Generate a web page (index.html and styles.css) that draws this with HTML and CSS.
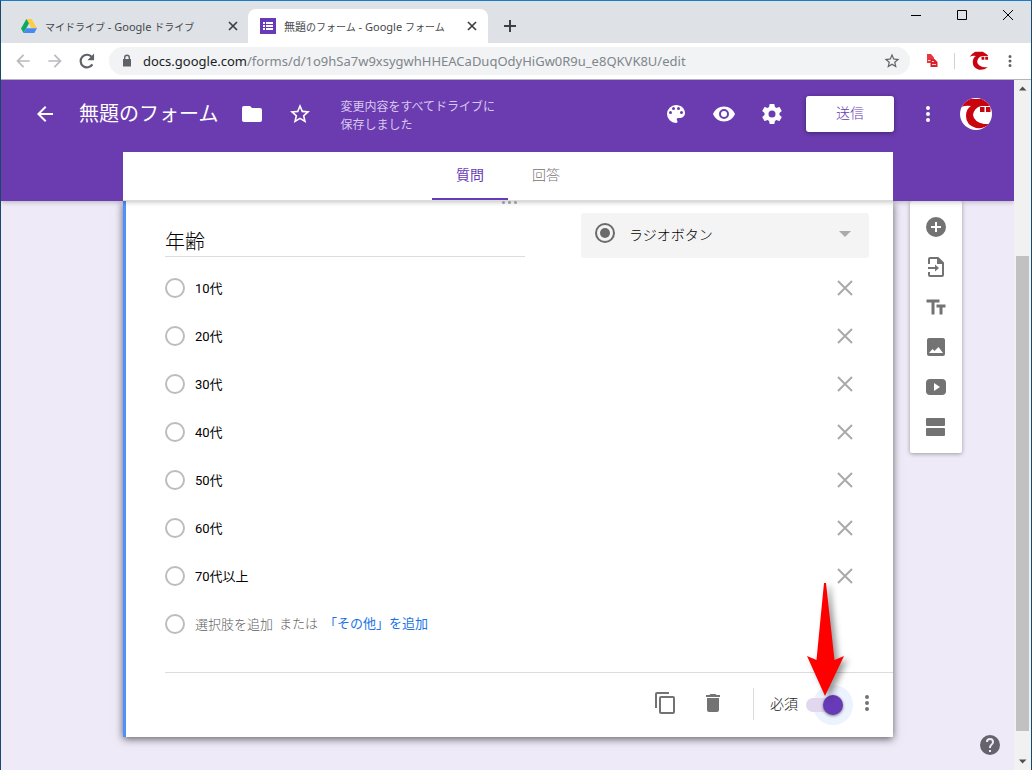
FILE: index.html
```html
<!DOCTYPE html>
<html lang="ja">
<head>
<meta charset="utf-8">
<meta name="viewport" content="width=device-width, initial-scale=1">
<title>無題のフォーム - Google フォーム</title>
<link rel="stylesheet" href="styles.css">
</head>
<body>
<svg class="defs" aria-hidden="true">
  <symbol id="close" viewBox="0 0 24 24"><path d="M5 5l14 14M19 5L5 19" fill="none" stroke="currentColor" stroke-width="2"/></symbol>
  <symbol id="tabclose" viewBox="0 0 16 16"><path d="M4 4l8 8M12 4l-8 8" fill="none" stroke="currentColor" stroke-width="1.700"/></symbol>
  <symbol id="more" viewBox="0 0 24 24"><path d="M12 8a2 2 0 1 0 0-4 2 2 0 0 0 0 4zm0 2a2 2 0 1 0 0 4 2 2 0 0 0 0-4zm0 6a2 2 0 1 0 0 4 2 2 0 0 0 0-4z"/></symbol>
  <symbol id="star" viewBox="0 0 24 24"><path d="M22 9.24l-7.19-.62L12 2 9.19 8.63 2 9.24l5.46 4.73L5.82 21 12 17.27 18.18 21l-1.63-7.03L22 9.24zM12 15.4l-3.76 2.27 1-4.28-3.32-2.88 4.38-.38L12 6.1l1.71 4.04 4.38.38-3.32 2.88 1 4.28L12 15.4z"/></symbol>
  <symbol id="back" viewBox="0 0 24 24"><path d="M20 11H7.83l5.59-5.59L12 4l-8 8 8 8 1.41-1.41L7.83 13H20v-2z"/></symbol>
  <symbol id="mascot" viewBox="0 0 32 32"><path d="M1 9Q5 3 10 1H22Q28 4 31 8L21 8Q14 10 13 17Q14 24 24 26L30 26Q24 31 16 30Q6 27 6 18Q6 11 11 8Q6 7 1 9z" fill="#c9040f"/><path d="M20 9h4.500v5H20zM26 9h4.500v5H26z" fill="#c9040f"/></symbol>
</svg>
<div class="window">
  <header class="tabstrip">
    <div class="tab">
      <svg class="i16" viewBox="0 0 16 16"><path d="M5.4 1h5.2L16 10.3h-5.3z" fill="#ffcd40"/><path d="M5.4 1L0 10.4 2.6 15 8 5.6z" fill="#11a861"/><path d="M5.3 10.3H16L13.3 15H2.6z" fill="#4688f4"/></svg>
      <span class="tab-title"><span class="kana">マイドライブ</span> - Google <span class="kana">ドライブ</span></span>
      <button class="tab-close" aria-label="閉じる"><svg class="i16"><use href="#tabclose"/></svg></button>
    </div>
    <div class="tab active">
      <svg class="i16" viewBox="0 0 16 16"><path d="M0 0h16v16H0z" fill="#673ab7"/><path d="M3 4h2v2H3zM3 7h2v2H3zM3 10h2v2H3zM6 4h7v2H6zM6 7h7v2H6zM6 10h7v2H6z" fill="#fff"/></svg>
      <span class="tab-title">無題<span class="kana">のフォーム</span> - Google <span class="kana">フォーム</span></span>
      <button class="tab-close" aria-label="閉じる"><svg class="i16"><use href="#tabclose"/></svg></button>
    </div>
    <button class="new-tab" aria-label="新しいタブ"><svg class="i16" viewBox="0 0 16 16"><path d="M8 2v12M2 8h12" stroke="#3c4043" stroke-width="2"/></svg></button>
    <div class="win-controls">
      <button aria-label="最小化"><svg viewBox="0 0 10 10"><path d="M0 5.5h10" stroke="#000"/></svg></button>
      <button aria-label="最大化"><svg viewBox="0 0 10 10"><path d="M.5.5h9v9h-9z" stroke="#000" fill="none"/></svg></button>
      <button aria-label="ウィンドウを閉じる"><svg viewBox="0 0 10 10"><path d="M0 0l10 10M10 0L0 10" stroke="#000"/></svg></button>
    </div>
  </header>
  <nav class="toolbar">
    <button class="nav-btn dim" aria-label="戻る"><svg viewBox="0 0 24 24"><use href="#back"/></svg></button>
    <button class="nav-btn dim" aria-label="進む"><svg viewBox="0 0 24 24"><path d="M4 11h12.17l-5.59-5.59L12 4l8 8-8 8-1.41-1.41L16.17 13H4z"/></svg></button>
    <button class="nav-btn" aria-label="再読み込み"><svg viewBox="0 0 24 24"><path d="M18.5 16A7.6 7.6 0 1 1 17.8 7.2" fill="none" stroke="currentColor" stroke-width="2.6"/><path d="M20.5 3v8h-8z"/></svg></button>
    <div class="omnibox">
      <svg class="lock" viewBox="0 0 16 16"><path d="M4 6h8v7.500H4z"/><path d="M5.700 7V4.500a2.300 2.300 0 0 1 4.600 0V7" fill="none" stroke="currentColor" stroke-width="1.400"/></svg>
      <span class="url"><b>docs.google.com</b>/forms/d/1o9hSa7w9xsygwhHHEACaDuqOdyHiGw0R9u_e8QKVK8U/edit</span>
      <button class="bookmark" aria-label="ブックマーク"><svg viewBox="0 0 24 24"><use href="#star"/></svg></button>
    </div>
    <svg class="ext" viewBox="0 0 16 16"><path d="M3 1h4l3 3.500V10H3z" fill="#e5383f"/><path d="M6.500 6h4L13.500 9v5h-7z" fill="#d9202b"/><path d="M4 7.500h2.500M8 11.500h4M8 8.500h2" stroke="#fff" stroke-width=".8"/></svg>
    <span class="sep"></span>
    <svg class="chrome-avatar" viewBox="0 0 32 32"><use href="#mascot"/></svg>
    <button class="chrome-more" aria-label="メニュー"><svg viewBox="0 0 24 24"><use href="#more"/></svg></button>
  </nav>
  <div class="viewport">
    <div class="app">
      <header class="app-head">
        <div class="head-row">
          <button class="icon" aria-label="戻る"><svg><use href="#back"/></svg></button>
          <h1>無題のフォーム</h1>
          <button class="icon" aria-label="フォルダに移動"><svg viewBox="0 0 24 24"><path d="M10 4H4a2 2 0 0 0-2 2v12c0 1.100.900 2 2 2h16a2 2 0 0 0 2-2V8a2 2 0 0 0-2-2h-8z"/></svg></button>
          <button class="icon star" aria-label="スターを付ける"><svg><use href="#star"/></svg></button>
          <p class="saved">変更内容をすべてドライブに<br>保存しました</p>
          <div class="head-actions">
            <button class="icon" aria-label="テーマ"><svg viewBox="0 0 24 24"><path d="M12 3a9 9 0 0 0 0 18c.83 0 1.500-.67 1.500-1.500 0-.39-.15-.74-.39-1.010-.23-.26-.38-.61-.38-.99 0-.83.67-1.500 1.500-1.500H16c2.760 0 5-2.240 5-5 0-4.420-4.030-8-9-8zm-5.500 9a1.500 1.500 0 1 1 0-3 1.500 1.500 0 0 1 0 3zm3-4a1.500 1.500 0 1 1 0-3 1.500 1.500 0 0 1 0 3zm5 0a1.500 1.500 0 1 1 0-3 1.500 1.500 0 0 1 0 3zm3 4a1.500 1.500 0 1 1 0-3 1.500 1.500 0 0 1 0 3z"/></svg></button>
            <button class="icon" aria-label="プレビュー"><svg viewBox="0 0 24 24"><path d="M12 4.500C7 4.500 2.730 7.610 1 12c1.730 4.390 6 7.500 11 7.500s9.270-3.110 11-7.500c-1.730-4.390-6-7.500-11-7.500zM12 17a5 5 0 1 1 0-10 5 5 0 0 1 0 10zm0-8a3 3 0 1 0 0 6 3 3 0 0 0 0-6z"/></svg></button>
            <button class="icon" aria-label="設定"><svg viewBox="0 0 24 24"><path d="M19.430 12.980c.04-.32.07-.64.07-.98s-.03-.66-.07-.98l2.110-1.650c.19-.15.24-.42.12-.64l-2-3.460c-.12-.22-.39-.3-.61-.22l-2.490 1c-.52-.4-1.080-.73-1.690-.98l-.38-2.650A.49.49 0 0 0 14 2h-4c-.25 0-.46.18-.49.42l-.38 2.650c-.61.25-1.170.59-1.690.98l-2.490-1c-.23-.09-.49 0-.61.22l-2 3.460c-.13.22-.07.49.12.64l2.110 1.650c-.04.32-.07.65-.07.98s.03.66.07.98l-2.110 1.650c-.19.15-.24.42-.12.64l2 3.460c.12.22.39.3.61.22l2.490-1c.52.4 1.080.73 1.690.98l.38 2.650c.03.24.24.42.49.42h4c.25 0 .46-.18.49-.42l.38-2.650c.61-.25 1.170-.59 1.690-.98l2.490 1c.23.09.49 0 .61-.22l2-3.460c.12-.22.07-.49-.12-.64zM12 15.500a3.500 3.500 0 1 1 0-7 3.500 3.500 0 0 1 0 7z"/></svg></button>
          </div>
          <button class="send">送信</button>
          <button class="icon" aria-label="その他"><svg><use href="#more"/></svg></button>
          <svg class="avatar" viewBox="0 0 32 32"><use href="#mascot"/></svg>
        </div>
        <div class="form-tabs" role="tablist">
          <button role="tab" aria-selected="true">質問</button>
          <button role="tab" aria-selected="false">回答</button>
        </div>
      </header>
      <main class="content">
        <section class="card">
          <span class="grip"><i></i><i></i><i></i></span>
          <div class="q-head">
            <input class="q-title" type="text" value="年齢" aria-label="質問">
            <div class="type-box">
              <svg viewBox="0 0 24 24"><circle cx="12" cy="12" r="9" fill="none" stroke="currentColor" stroke-width="2"/><circle cx="12" cy="12" r="5"/></svg>
              <select aria-label="質問の形式"><option>ラジオボタン</option></select>
              <svg class="caret" viewBox="0 0 24 24"><path d="M6 9h12l-6 6z"/></svg>
            </div>
          </div>
          <ul class="options">
            <li><input type="radio" name="o" id="o1" disabled><label for="o1">10代</label><button aria-label="削除"><svg><use href="#close"/></svg></button></li>
            <li><input type="radio" name="o" id="o2" disabled><label for="o2">20代</label><button aria-label="削除"><svg><use href="#close"/></svg></button></li>
            <li><input type="radio" name="o" id="o3" disabled><label for="o3">30代</label><button aria-label="削除"><svg><use href="#close"/></svg></button></li>
            <li><input type="radio" name="o" id="o4" disabled><label for="o4">40代</label><button aria-label="削除"><svg><use href="#close"/></svg></button></li>
            <li><input type="radio" name="o" id="o5" disabled><label for="o5">50代</label><button aria-label="削除"><svg><use href="#close"/></svg></button></li>
            <li><input type="radio" name="o" id="o6" disabled><label for="o6">60代</label><button aria-label="削除"><svg><use href="#close"/></svg></button></li>
            <li><input type="radio" name="o" id="o7" disabled><label for="o7">70代以上</label><button aria-label="削除"><svg><use href="#close"/></svg></button></li>
            <li class="add"><input type="radio" name="o" id="o8" disabled><label for="o8">選択肢を追加</label><span>または</span><a href="#">「その他」を追加</a></li>
          </ul>
          <footer class="q-foot">
            <button class="icon" aria-label="コピーを作成"><svg viewBox="0 0 24 24"><path d="M16 1H4a2 2 0 0 0-2 2v14h2V3h12zm4 4H8a2 2 0 0 0-2 2v14c0 1.100.900 2 2 2h12a2 2 0 0 0 2-2V7a2 2 0 0 0-2-2zm0 16H8V7h12z"/></svg></button>
            <button class="icon" aria-label="削除"><svg viewBox="0 0 24 24"><path d="M6 7h12v12a2 2 0 0 1-2 2H8a2 2 0 0 1-2-2zM19 4h-3.500l-1-1h-5l-1 1H5v2h14z"/></svg></button>
            <span class="foot-sep"></span>
            <label class="required" for="req">必須</label>
            <input class="toggle" id="req" type="checkbox" checked>
            <button class="icon" aria-label="その他のオプション"><svg><use href="#more"/></svg></button>
            <svg class="pointer" viewBox="0 0 50 124" aria-hidden="true"><path d="M17 1h2l8.500 77 9.500-4-19 40L0 74l9.500 4z" fill="#f00"/></svg>
          </footer>
        </section>
        <aside class="side">
          <button class="icon" aria-label="質問を追加"><svg viewBox="0 0 24 24"><path d="M12 2a10 10 0 1 0 0 20 10 10 0 0 0 0-20zm5 11h-4v4h-2v-4H7v-2h4V7h2v4h4z"/></svg></button>
          <button class="icon" aria-label="質問をインポート"><svg viewBox="0 0 24 24"><path d="M5 9V4q0-1 1-1h8l5 5v12q0 1-1 1H6q-1 0-1-1v-3" fill="none" stroke="currentColor" stroke-width="2"/><path d="M13 2v7h7zM4 12h7V9.500l4 3.500-4 3.500V14H4z"/></svg></button>
          <button class="icon" aria-label="タイトルと説明を追加"><svg viewBox="0 0 24 24"><path d="M2.500 4.500v3h5v12h3v-12h5v-3zM21.500 9.500h-9v3h3v7h3v-7h3z"/></svg></button>
          <button class="icon" aria-label="画像を追加"><svg viewBox="0 0 24 24"><path d="M21 19V5a2 2 0 0 0-2-2H5a2 2 0 0 0-2 2v14c0 1.100.900 2 2 2h14a2 2 0 0 0 2-2zM5 18l3.500-4 2 2L14.500 12l4.500 6z"/></svg></button>
          <button class="icon" aria-label="動画を追加"><svg viewBox="0 0 24 24"><path d="M6 4h12a4 4 0 0 1 4 4v8a4 4 0 0 1-4 4H6a4 4 0 0 1-4-4V8a4 4 0 0 1 4-4zm4 4v8l6-4z" fill-rule="evenodd"/></svg></button>
          <button class="icon" aria-label="セクションを追加"><svg viewBox="0 0 24 24"><rect x="2" y="3" width="19" height="8" rx="1"/><rect x="2" y="13" width="19" height="8" rx="1"/></svg></button>
        </aside>
      </main>
      <button class="icon help" aria-label="ヘルプ"><svg viewBox="0 0 24 24"><path d="M12 2a10 10 0 1 0 0 20 10 10 0 0 0 0-20zm1 17h-2v-2h2zm2.070-7.750l-.9.920C13.450 12.900 13 13.500 13 15h-2v-.5c0-1.100.45-2.100 1.170-2.830l1.240-1.260c.37-.36.59-.86.59-1.410a2 2 0 0 0-4 0H8a4 4 0 0 1 8 0c0 .88-.36 1.680-.93 2.250z"/></svg></button>
    </div>
    <div class="scrollbar" aria-hidden="true">
      <svg viewBox="0 0 17 17"><path d="M5 10.500h7.500L8.500 6.500z"/></svg>
      <div class="track"><div class="thumb"></div></div>
      <svg viewBox="0 0 17 17"><path d="M5 6.500h7.500L8.500 10.500z"/></svg>
    </div>
  </div>
</div>
</body>
</html>
```

FILE: styles.css
```css
* { box-sizing: border-box; }
body {
  margin: 0;
  font-family: Roboto, "Noto Sans CJK JP", sans-serif;
  font-weight: 400;
  font-size: 13px;
  color: #000;
}
button, input, select { font: inherit; }
button { border: 0; padding: 0; background: none; color: inherit; }
svg { display: block; fill: currentColor; }
h1, p, ul { margin: 0; padding: 0; font-weight: inherit; }
.defs { position: absolute; width: 0; height: 0; }
.window {
  display: flex;
  flex-direction: column;
  height: 100vh;
  border: 1px solid #17496b;
  border-top-color: #1a7dcc;
  border-bottom: 0;
}

/* Browser tabs */
.tabstrip { display: flex; align-items: flex-end; height: 42px; background: #dee1e6; }
.tab {
  display: flex;
  align-items: center;
  gap: 8px;
  width: 240px;
  height: 34px;
  padding: 0 8px 0 12px;
  color: #45494d;
  font-family: "Noto Sans", "Noto Sans CJK JP", sans-serif;
  font-size: 11px;
}
.tab:first-child { width: 247px; padding: 0 7px 0 20px; }
.tab.active { background: #fff; border-radius: 8px 8px 0 0; }
.kana { font-size: 10px; }
.i16 { flex: none; width: 16px; height: 16px; }
.tab-title { flex: 1; white-space: nowrap; }
.tab-close { color: #3c4043; }
.new-tab { align-self: center; margin: 8px 0 0 14px; }
.win-controls { display: flex; align-self: flex-start; margin-left: auto; }
.win-controls button { display: grid; place-items: center; width: 46px; height: 28px; }
.win-controls svg { width: 10px; height: 10px; }

/* Address bar */
.toolbar {
  display: flex;
  align-items: center;
  height: 37px;
  padding: 0 12px;
  border-bottom: 1px solid #b4b4b6;
  background: #fff;
  color: #5f6368;
}
.nav-btn { margin-right: 12px; }
.nav-btn svg { width: 20px; height: 20px; }
.dim { color: #b9bbbe; }
.omnibox {
  display: flex;
  align-items: center;
  flex: 1;
  min-width: 0;
  height: 28px;
  padding: 0 9px 0 10px;
  border-radius: 14px;
  background: #f1f3f4;
}
.lock { width: 16px; height: 16px; margin-right: 8px; }
.url {
  flex: 1;
  overflow: hidden;
  white-space: nowrap;
  color: #80868b;
  font: 400 13px "Noto Sans", sans-serif;
}
.url b { color: #202124; font-weight: 400; }
.bookmark svg { width: 18px; height: 18px; }
.ext { width: 16px; height: 16px; margin-left: 14px; }
.sep { width: 1px; height: 16px; margin: 0 14px; background: #cfd1d4; }
.chrome-avatar { width: 20px; height: 20px; }
.chrome-more { margin-left: 12px; }
.chrome-more svg { width: 18px; height: 18px; }

/* Form editor */
.viewport { display: flex; flex: 1; min-height: 0; }
.app { position: relative; flex: 1; overflow: hidden; background: #eeeaf8; }
.icon { flex: none; width: 24px; height: 24px; }
.icon svg { width: 24px; height: 24px; }
.app-head {
  position: relative;
  z-index: 1;
  background: #6b3bb0;
  color: #fff;
  box-shadow: 0 1px 5px rgba(0, 0, 0, .25);
}
.head-row { display: flex; align-items: center; height: 72px; padding: 0 22px 4px 32px; }
.head-row h1 { margin: 0 22px; padding-bottom: 3px; font-size: 20px; white-space: nowrap; }
.head-row .star { margin-left: 24px; }
.saved { margin-left: 28px; padding-top: 4px; font-size: 12px; line-height: 18px; color: #d8c9ee; }
.head-actions { display: flex; gap: 24px; margin-left: auto; }
.send {
  width: 88px;
  height: 36px;
  margin: 0 22px;
  padding-bottom: 4px;
  border-radius: 3px;
  background: #fff;
  color: #673ab7;
  font-size: 14px;
  font-weight: 300;
  box-shadow: 0 1px 4px rgba(0, 0, 0, .4);
}
.avatar { width: 32px; height: 32px; margin-left: 20px; border-radius: 50%; background: #fff; }
.form-tabs {
  display: flex;
  justify-content: center;
  height: 49px;
  margin: 0 121px 0 122px;
  border-bottom: 1px solid #dcdcdc;
  background: #fff;
}
.form-tabs button { width: 76px; padding-bottom: 4px; color: #757575; font-size: 14px; font-weight: 300; }
.form-tabs [aria-selected="true"] { padding-bottom: 2px; border-bottom: 2px solid #673ab7; color: #673ab7; font-weight: 400; }
.content {
  display: grid;
  grid-template-columns: 1fr 52px;
  align-items: start;
  gap: 17px;
  padding: 0 52px 0 122px;
}
.card {
  border-left: 3px solid #4d90fe;
  background: #fff;
  box-shadow: 0 2px 8px rgba(0, 0, 0, .6);
}
.grip { display: flex; justify-content: center; gap: 3px; height: 3px; }
.grip i { width: 3px; height: 3px; border-radius: 50%; background: #aaa; }
.q-head { display: flex; justify-content: space-between; padding: 9px 24px 6px 39px; }
.q-title {
  width: 360px;
  height: 44px;
  padding: 12px 0 0;
  border: 0;
  border-bottom: 1px solid #dcdcdc;
  background: none;
  font-size: 20px;
  font-weight: 300;
}
.type-box {
  display: flex;
  align-items: center;
  width: 288px;
  height: 45px;
  padding: 0 12px 2px;
  border-radius: 3px;
  background: #f4f4f4;
  color: #6b6b6b;
}
.type-box svg { width: 24px; height: 24px; margin-bottom: 4px; }
.type-box select {
  flex: 1;
  appearance: none;
  padding: 0 12px;
  border: 0;
  background: none;
  color: #000;
  font-size: 14px;
  font-weight: 300;
}
.type-box .caret { color: #aaa; margin-bottom: 2px; }
.options { padding: 0 36px 24px 39px; list-style: none; }
.options li { display: flex; align-items: center; height: 48px; }
.options input {
  appearance: none;
  width: 20px;
  height: 20px;
  margin: 0 10px 0 0;
  border: 2px solid #bdbdbd;
  border-radius: 50%;
}
.options label { flex: 1; padding-bottom: 2px; }
.options button { color: #aaa; }
.options button svg { width: 24px; height: 24px; }
.options .add { gap: 6px; color: #606060; font-weight: 300; }
.options .add input { margin-right: 4px; }
.options .add label { flex: none; }
.options .add span, .options .add a { padding-bottom: 3px; }
.options a { color: #1a73e8; text-decoration: none; font-weight: 400; }
.q-foot {
  position: relative;
  z-index: 0;
  display: flex;
  align-items: center;
  justify-content: flex-end;
  height: 65px;
  margin-left: 39px;
  padding: 0 14px 4px 0;
  border-top: 1px solid #dcdcdc;
  color: #737373;
}
.q-foot .icon + .icon { margin-left: 24px; }
.foot-sep { width: 1px; height: 32px; margin: 2px 16px 0 28px; background: #dcdcdc; }
.required { margin-right: 8px; color: #222; font-size: 14px; font-weight: 300; }
.toggle {
  position: relative;
  appearance: none;
  width: 37px;
  height: 14px;
  margin: 4px 12px 0 0;
  border-radius: 7px;
  background: #e1d8ef;
}
.toggle::before {
  content: "";
  position: absolute;
  z-index: -1;
  right: -10px;
  top: -13px;
  width: 40px;
  height: 40px;
  border-radius: 50%;
  background: #ecf2fe;
}
.toggle::after {
  content: "";
  position: absolute;
  right: 0;
  top: -3px;
  width: 20px;
  height: 20px;
  border-radius: 50%;
  background: #673ab7;
  box-shadow: 0 1px 3px rgba(0, 0, 0, .5);
}
.pointer {
  position: absolute;
  right: 36px;
  bottom: 31px;
  width: 50px;
  height: 124px;
  filter: drop-shadow(4px 3px 3px rgba(0, 0, 0, .4));
}
.side {
  display: flex;
  flex-direction: column;
  align-items: center;
  gap: 16px;
  padding: 14px 0;
  border-radius: 2px;
  background: #fff;
  color: #737373;
  box-shadow: 0 1px 4px rgba(0, 0, 0, .35);
}
.help { position: absolute; right: 12px; bottom: 13px; color: #67636d; }

/* Scrollbar */
.scrollbar { display: flex; flex-direction: column; width: 17px; background: #f1f1f1; color: #505050; }
.scrollbar svg { width: 17px; height: 17px; }
.track { flex: 1; display: flex; flex-direction: column; justify-content: flex-end; padding: 0 2px 22px; }
.thumb { height: 75%; background: #c1c1c1; }
```
